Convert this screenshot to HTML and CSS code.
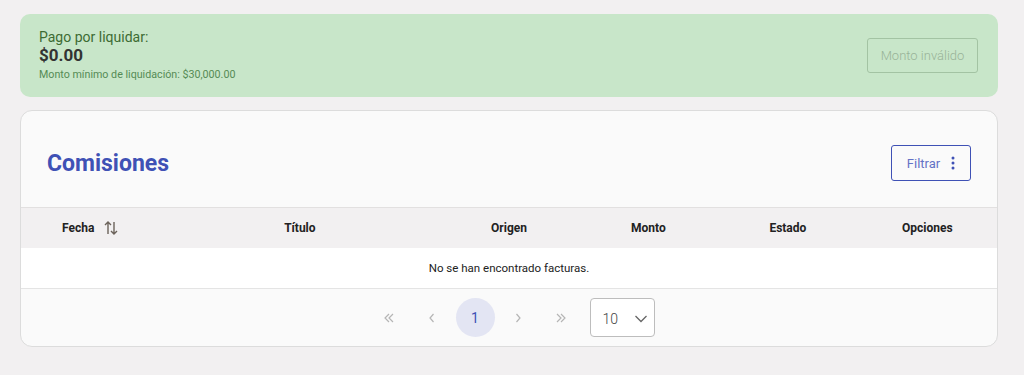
FILE: index.html
```html
<!DOCTYPE html>
<html lang="es">
<head>
  <meta charset="UTF-8" />
  <meta name="viewport" content="width=device-width, initial-scale=1.0"/>
  <title>Comisiones</title>
  <link rel="stylesheet" href="styles.css">
</head>
<body>

  <section class="payout">
    <div class="payout-info">
      <p class="payout-label">Pago por liquidar:</p>
      <p class="payout-amount">$0.00</p>
      <p class="payout-min">Monto mínimo de liquidación: $30,000.00</p>
    </div>
    <button class="btn-disabled" disabled>Monto inválido</button>
  </section>

  <section class="card">
    <div class="card-header">
      <h2>Comisiones</h2>
      <button class="btn-filter">
        Filtrar
        <svg width="4" height="14" viewBox="0 0 4 14"><circle cx="2" cy="2" r="1.5"/><circle cx="2" cy="7" r="1.5"/><circle cx="2" cy="12" r="1.5"/></svg>
      </button>
    </div>

    <div class="table-head">
      <div class="col">Fecha
        <svg class="sort" width="16" height="16" viewBox="0 0 16 16" fill="none" stroke="#6b625a" stroke-width="1.4">
          <path d="M5 14V2M2 5l3-3 3 3"/>
          <path d="M11 2v12M8 11l3 3 3-3"/>
        </svg>
      </div>
      <div class="col">Título</div>
      <div class="col">Origen</div>
      <div class="col">Monto</div>
      <div class="col">Estado</div>
      <div class="col">Opciones</div>
    </div>

    <div class="table-empty">No se han encontrado facturas.</div>

    <div class="pager">
      <span class="page-link">
        <svg width="12" height="12" viewBox="0 0 12 12" fill="none" stroke="currentColor" stroke-width="1.2"><path d="M6 2L2 6l4 4M10 2L6 6l4 4"/></svg>
      </span>
      <span class="page-link">
        <svg width="12" height="12" viewBox="0 0 12 12" fill="none" stroke="currentColor" stroke-width="1.2"><path d="M7.5 2L4 6l3.5 4"/></svg>
      </span>
      <span class="page-link current">1</span>
      <span class="page-link">
        <svg width="12" height="12" viewBox="0 0 12 12" fill="none" stroke="currentColor" stroke-width="1.2"><path d="M4.5 2L8 6l-3.5 4"/></svg>
      </span>
      <span class="page-link">
        <svg width="12" height="12" viewBox="0 0 12 12" fill="none" stroke="currentColor" stroke-width="1.2"><path d="M2 2l4 4-4 4M6 2l4 4-4 4"/></svg>
      </span>
      <div class="page-size">
        <span>10</span>
        <svg width="14" height="14" viewBox="0 0 14 14" fill="none" stroke="#666" stroke-width="1.3"><path d="M1.5 4l5.5 5.5 5.5-5.5"/></svg>
      </div>
    </div>
  </section>

</body>
</html>
```

FILE: styles.css
```css
* {
  box-sizing: border-box;
  margin: 0;
  padding: 0;
}

body {
  font-family: Roboto, 'Liberation Sans', sans-serif;
  background: #f2f0f1;
  color: #333;
  padding: 14px 26px 0 20px;
}

button {
  font-family: inherit;
  background: none;
}

.payout {
  background: #c8e6c9;
  border-radius: 10px;
  height: 83px;
  padding: 0 20px 0 19px;
  display: flex;
  align-items: center;
  justify-content: space-between;
}

.payout-label {
  font-size: 14px;
  color: #3d6b33;
  line-height: 17px;
}

.payout-amount {
  font-size: 17px;
  font-weight: 700;
  color: #333;
  line-height: 19px;
}

.payout-min {
  font-size: 10.7px;
  color: #558b55;
  line-height: 15px;
  margin-top: 2px;
}

.btn-disabled {
  border: 1.5px solid #a3c3a3;
  border-radius: 3px;
  color: #98b398;
  font-size: 13px;
  font-weight: 300;
  width: 111px;
  height: 35px;
}

.card {
  margin-top: 13px;
  background: #fafafa;
  border: 1px solid #dcdcdc;
  border-radius: 12px;
  overflow: hidden;
}

.card-header {
  display: flex;
  justify-content: space-between;
  align-items: center;
  padding: 34px 26px 26px 26px;
}

.card-header h2 {
  font-size: 23px;
  color: #3f51b5;
  font-weight: 700;
}

.btn-filter {
  border: 1px solid #3f51b5;
  border-radius: 3px;
  color: #6472c6;
  font-size: 13px;
  width: 80px;
  height: 36px;
  display: flex;
  align-items: center;
  justify-content: center;
  gap: 11px;
}

.btn-filter svg {
  fill: #3f51b5;
}

.table-head {
  display: grid;
  grid-template-columns: 1fr 2fr 1fr 1fr 1fr 1fr;
  background: #f2f0f1;
  border-top: 1px solid #e2e0e0;
  height: 41px;
  align-items: center;
}

.col {
  font-size: 12px;
  font-weight: 700;
  color: #222;
  text-align: center;
  display: flex;
  align-items: center;
  justify-content: center;
  gap: 9px;
}

.table-empty {
  background: #fff;
  height: 41px;
  border-bottom: 1px solid #e4e4e4;
  display: flex;
  align-items: center;
  justify-content: center;
  font-size: 11.5px;
  color: #222;
}

.pager {
  height: 57px;
  display: flex;
  align-items: center;
  justify-content: center;
  padding-left: 6px;
  gap: 4px;
}

.page-link {
  width: 39px;
  height: 39px;
  border-radius: 50%;
  display: flex;
  align-items: center;
  justify-content: center;
  color: #b5b5b5;
  font-size: 14px;
}

.page-link.current {
  background: #e3e5f3;
  color: #3f51b5;
}

.page-size {
  margin-left: 5px;
  width: 65px;
  height: 39px;
  background: #fff;
  border: 1px solid #bdbdbd;
  border-radius: 4px;
  display: flex;
  align-items: center;
  justify-content: space-between;
  padding: 3px 6px 0 12px;
  font-size: 14px;
  font-weight: 300;
  color: #444;
}
```
